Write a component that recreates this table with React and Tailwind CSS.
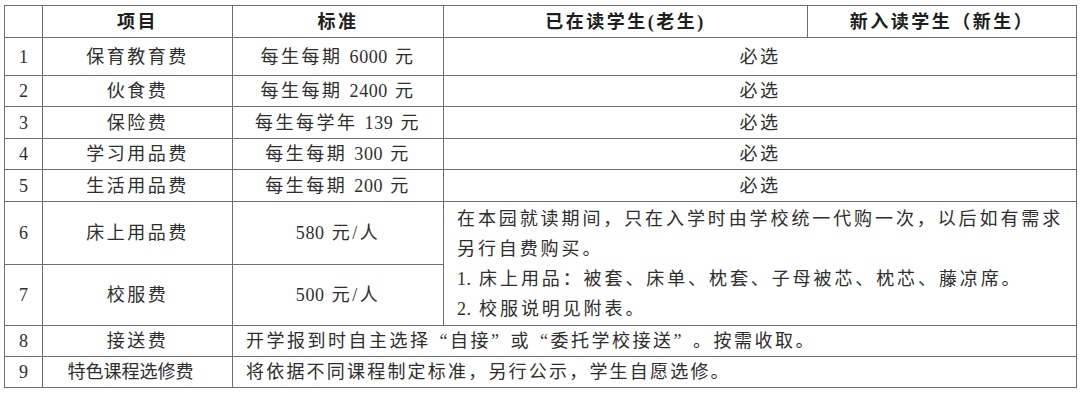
import React from "react";

function T({ s }) {
  const parts = s.split(/(\d+\.?)/);
  return (
    <>
      {parts.map((p, i) =>
        /\d/.test(p) ? (
          <span key={i} className="tracking-[0.6px]">{p}</span>
        ) : (
          <React.Fragment key={i}>{p}</React.Fragment>
        )
      )}
    </>
  );
}

const rows = [
  { n: "1", item: "保育教育费", std: "每生每期 6000 元", h: "h-[38px]" },
  { n: "2", item: "伙食费", std: "每生每期 2400 元", h: "h-[31px]" },
  { n: "3", item: "保险费", std: "每生每学年 139 元", h: "h-[32px]" },
  { n: "4", item: "学习用品费", std: "每生每期 300 元", h: "h-[31px]" },
  { n: "5", item: "生活用品费", std: "每生每期 200 元", h: "h-[32px]" },
];

const cell = "border border-[#6e6e6e] p-0 text-center align-middle";

export default function App() {
  return (
    <div className="w-[1080px] h-[400px] bg-white pl-[4px] pt-[5px] font-['Liberation_Serif','Noto_Sans_CJK_SC',serif] text-[18px] leading-none text-[#2e2e2e] tracking-[2.5px]">
      <table className="table-fixed border-collapse w-[1072px]">
        <colgroup>
          <col className="w-[38px]" />
          <col className="w-[190px]" />
          <col className="w-[211px]" />
          <col className="w-[364px]" />
          <col className="w-[269px]" />
        </colgroup>
        <tbody>
          <tr className="h-[32px] font-bold text-[#1e1e1e]">
            <td className={cell}></td>
            <td className={cell}>项目</td>
            <td className={cell}>标准</td>
            <td className={cell}>已在读学生(老生)</td>
            <td className={cell}>新入读学生（新生）</td>
          </tr>
          {rows.map((r) => (
            <tr key={r.n} className={r.h}>
              <td className={cell + " tracking-normal"}>{r.n}</td>
              <td className={cell}>{r.item}</td>
              <td className={cell}><T s={r.std} /></td>
              <td className={cell} colSpan={2}>必选</td>
            </tr>
          ))}
          <tr className="h-[63px]">
            <td className={cell + " tracking-normal"}>6</td>
            <td className={cell}>床上用品费</td>
            <td className={cell}><T s="580 元/人" /></td>
            <td className="border border-[#6e6e6e] p-0 pl-[13px] text-left align-middle leading-[30px] whitespace-nowrap tracking-[2.9px]" colSpan={2} rowSpan={2}>
              <div>在本园就读期间，只在入学时由学校统一代购一次，以后如有需求</div>
              <div>另行自费购买。</div>
              <div><T s="1." /> 床上用品：被套、床单、枕套、子母被芯、枕芯、藤凉席。</div>
              <div><T s="2." /> 校服说明见附表。</div>
            </td>
          </tr>
          <tr className="h-[61px]">
            <td className={cell + " tracking-normal"}>7</td>
            <td className={cell}>校服费</td>
            <td className={cell}><T s="500 元/人" /></td>
          </tr>
          <tr className="h-[31px]">
            <td className={cell + " tracking-normal"}>8</td>
            <td className={cell}>接送费</td>
            <td className="border border-[#6e6e6e] p-0 pl-[13px] text-left align-middle whitespace-nowrap tracking-[2.5px]" colSpan={3}>
              开学报到时自主选择<span className="ml-[9px]">“</span>自接<span className="mr-[9px]">”</span>或<span className="ml-[9px]">“</span>委托学校接送<span className="mr-[9px]">”</span>。按需收取。
            </td>
          </tr>
          <tr className="h-[31px]">
            <td className={cell + " tracking-normal"}>9</td>
            <td className={cell + " tracking-normal pr-[14px]"}>特色课程选修费</td>
            <td className="border border-[#6e6e6e] p-0 pl-[13px] text-left align-middle whitespace-nowrap tracking-[2.2px]" colSpan={3}>
              将依据不同课程制定标准，另行公示，学生自愿选修。
            </td>
          </tr>
        </tbody>
      </table>
    </div>
  );
}
